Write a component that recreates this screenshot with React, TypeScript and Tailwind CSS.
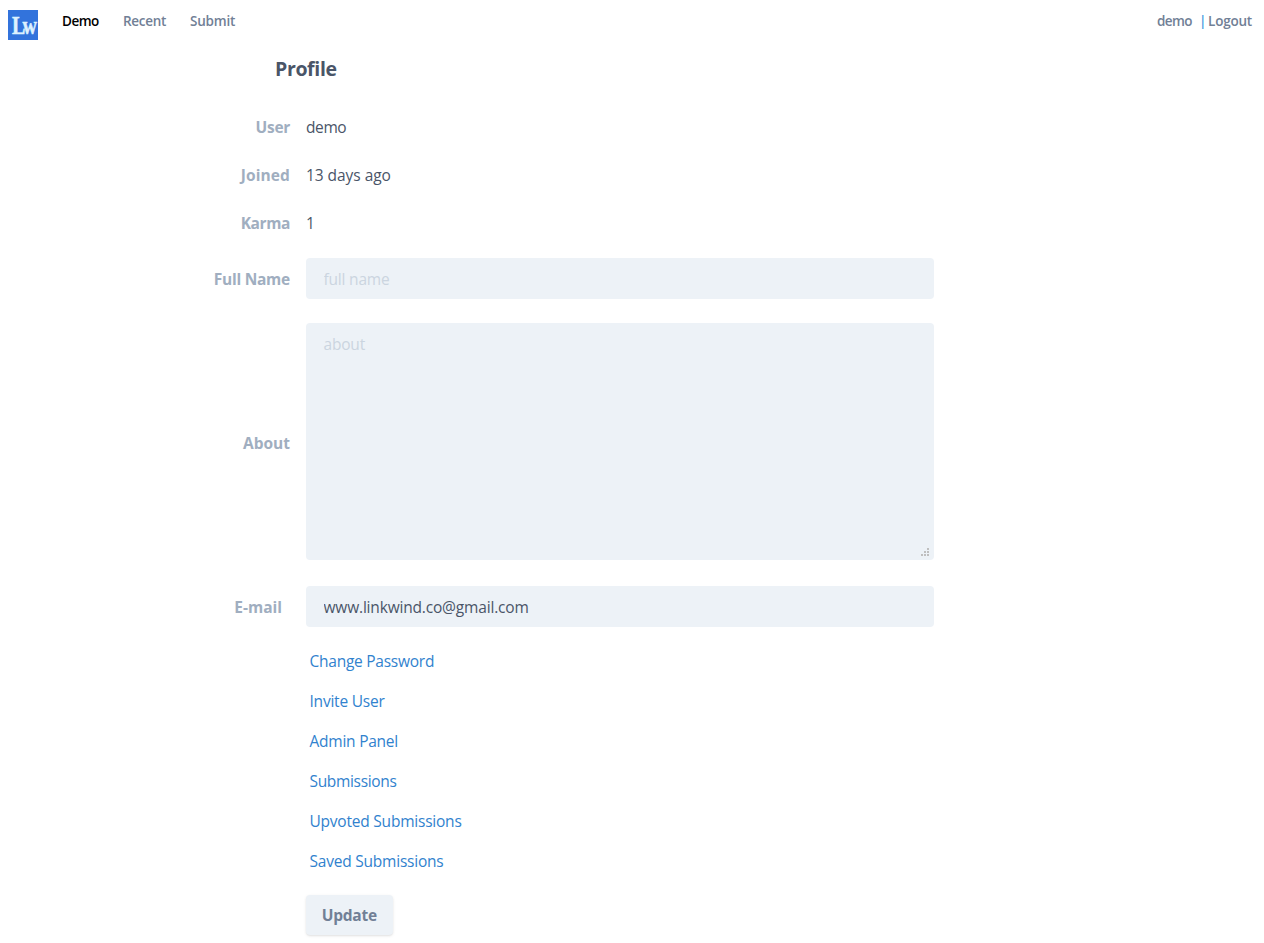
import type { ReactNode } from "react";

const links = [
    { title: "Change Password", tracking: "tracking-[-0.25px]" },
    { title: "Invite User", tracking: "tracking-[-0.22px]" },
    { title: "Admin Panel", tracking: "tracking-[-0.24px]" },
    { title: "Submissions", tracking: "tracking-[-0.33px]" },
    { title: "Upvoted Submissions", tracking: "tracking-[-0.22px]" },
    { title: "Saved Submissions", tracking: "tracking-[-0.22px]" },
];

function Logo() {
    return (
        <svg className="w-[30px] h-[30px] shrink-0 overflow-visible" viewBox="0 0 30 30">
            <rect width="30" height="30" fill="#3273dc" />
            <text transform="translate(4 23.5) scale(0.8 1)" fontFamily="Liberation Serif, serif" fontSize="25" letterSpacing="-3.6" fill="#ddf1ff" stroke="#ddf1ff" strokeWidth="0.5">Lw</text>
        </svg>
    );
}

function Header() {
    return (
        <header className="flex justify-between h-[50px] pl-2 pr-3 text-[13.5px] font-semibold text-[#718096]">
            <div className="flex">
                <a href="#" className="mt-[10px] mr-6"><Logo /></a>
                <nav className="flex gap-6 h-[42px] items-center leading-5">
                    <a href="#" className="text-black w-[37px] whitespace-nowrap tracking-[-0.5px]">Demo</a>
                    <a href="#" className="w-[43px] whitespace-nowrap tracking-[-0.3px]">Recent</a>
                    <a href="#" className="whitespace-nowrap tracking-[-0.2px]">Submit</a>
                </nav>
            </div>
            <div className="flex h-[42px] items-center leading-5">
                <a href="#" className="w-[42px] whitespace-nowrap tracking-[-0.6px]">demo</a>
                <span className="w-[9px] text-[#4299e1]">|</span>
                <a href="#" className="w-11 whitespace-nowrap tracking-[-0.2px]">Logout</a>
            </div>
        </header>
    );
}

function Row({ label, labelClass, className, children }: { label: string; labelClass: string; className: string; children: ReactNode }) {
    return (
        <div className={`flex items-center ${className}`}>
            <label className={`w-[142px] text-right font-bold text-[#a0aec0] whitespace-nowrap ${labelClass}`}>{label}</label>
            <div className="w-[628px]">{children}</div>
        </div>
    );
}

export default function App() {
    return (
        <div className="w-full h-[943px] overflow-hidden bg-white text-[15.5px] leading-6 text-[#4a5568] font-['Open_Sans','Noto_Sans',sans-serif]">
            <Header />

            <h1 className="ml-[275px] h-[65px] pt-[5px] text-[19.5px] leading-7 font-bold tracking-[-0.35px]">Profile</h1>

            {/* Profile form */}
            <form className="ml-[164px]">
                <Row label="User" labelClass="pr-4 tracking-[-0.3px]" className="h-6 mb-6">
                    <span className="tracking-[-0.4px]">demo</span>
                </Row>
                <Row label="Joined" labelClass="pr-4 tracking-[0.1px]" className="h-6 mb-6">
                    <span className="tracking-[-0.05px]">13 days ago</span>
                </Row>
                <Row label="Karma" labelClass="pr-4 tracking-[-0.4px]" className="h-6 mb-[23px]">
                    <span>1</span>
                </Row>
                <Row label="Full Name" labelClass="pr-4 tracking-[-0.25px]" className="h-[41px] mb-6">
                    <input className="block w-full h-[41px] rounded bg-[#edf2f7] px-[17.5px] placeholder:text-[#cbd5e0] tracking-[-0.2px] outline-none" placeholder="full name" />
                </Row>
                <Row label="About" labelClass="pr-4 pt-[3px] tracking-[0px]" className="h-[237px] mb-[26px]">
                    <div className="relative">
                        <textarea className="block w-full h-[237px] resize-none rounded bg-[#edf2f7] px-[17.5px] py-[10px] leading-[22px] placeholder:text-[#cbd5e0] tracking-[-0.2px] outline-none" placeholder="about" />
                        {/* resize grip */}
                        <svg className="absolute right-[5px] bottom-1 w-2 h-2" viewBox="0 0 8 8" fill="#bfbfbf" shapeRendering="crispEdges">
                            <path d="M6 0h2v2H6zM3 3h2v2H3zM6 3h2v2H6zM0 6h2v2H0zM3 6h2v2H3zM6 6h2v2H6z" />
                        </svg>
                    </div>
                </Row>
                <Row label="E-mail" labelClass="pr-6 tracking-[0px]" className="h-[41px] mb-[14px]">
                    <input className="block w-full h-[41px] rounded bg-[#edf2f7] px-[17.5px] tracking-[-0.18px] outline-none" defaultValue="www.linkwind.co@gmail.com" />
                </Row>

                <div className="ml-[142px]">
                    <div className="flex flex-col items-start pl-[3.5px]">
                        {links.map((link) => (
                            <a key={link.title} href="#" className={`h-10 leading-10 text-[#3182ce] ${link.tracking}`}>{link.title}</a>
                        ))}
                    </div>
                    <button type="button" className="block mt-[14px] h-10 w-[86.5px] rounded bg-[#edf2f7] text-center font-bold text-[#718096] tracking-[-0.25px] shadow">Update</button>
                </div>
            </form>
        </div>
    );
}
